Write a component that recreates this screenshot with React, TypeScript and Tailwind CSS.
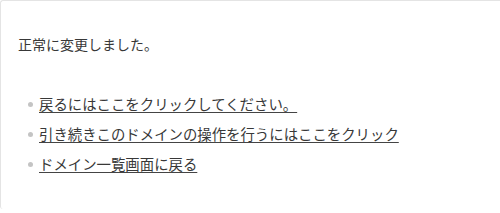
import * as React from "react";

const links = [
  "戻るにはここをクリックしてください。",
  "引き続きこのドメインの操作を行うにはここをクリック",
  "ドメイン一覧画面に戻る",
];

export default function App() {
  return (
    <div
      className="w-[500px] h-[213px] bg-white"
      style={{ fontFamily: '"Noto Sans CJK JP", "Noto Sans", sans-serif' }}
    >
      <div className="h-[209px] border-t border-l border-[#e4e4e4] rounded-tl-[3px] rounded-bl-[3px] pl-[17px] pt-[28px]">
        <p className="text-[14px] leading-[30px] text-[#383838]">
          正常に変更しました。
        </p>
        <ul className="mt-[30px] flex flex-col">
          {links.map((t) => (
            <li key={t} className="flex items-center h-[30px]">
              <span className="ml-[10px] mr-[6px] w-[5px] h-[5px] rounded-full bg-[#c4c4c4]" />
              <a
                href="#"
                className="text-[14.4px] leading-[30px] text-[#383838] underline decoration-[#444] underline-offset-[2px]"
              >
                {t}
              </a>
            </li>
          ))}
        </ul>
      </div>
    </div>
  );
}
